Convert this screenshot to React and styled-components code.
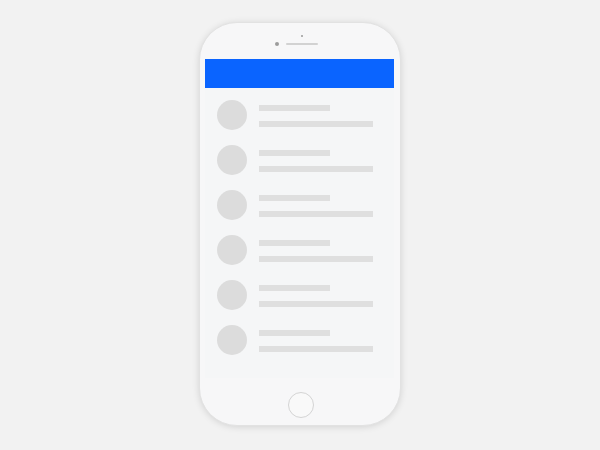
import React from 'react';
import styled, { createGlobalStyle } from 'styled-components';

const GlobalStyle = createGlobalStyle`
  html, body {
    margin: 0;
    padding: 0;
    background: #f2f2f2;
    font-family: "Liberation Sans", Arial, sans-serif;
  }
`;

const Page = styled.div`
  width: 600px;
  height: 450px;
  display: flex;
  align-items: center;
  justify-content: center;
`;

const Phone = styled.div`
  width: 202px;
  height: 404px;
  box-sizing: border-box;
  border-radius: 38px;
  background: #f7f7f8;
  border: 1px solid #e2e2e2;
  box-shadow: 0 1px 7px rgba(0, 0, 0, 0.13);
  display: flex;
  flex-direction: column;
  align-items: center;
  margin-top: -2px;
`;

const TopBar = styled.div`
  height: 36px;
  width: 100%;
  position: relative;
  flex-shrink: 0;
`;

const Sensor = styled.div`
  position: absolute;
  left: 101px;
  top: 12px;
  width: 2px;
  height: 2px;
  border-radius: 50%;
  background: #9a9a9a;
`;

const Camera = styled.div`
  position: absolute;
  left: 75px;
  top: 19px;
  width: 4px;
  height: 4px;
  border-radius: 50%;
  background: #9c9c9c;
`;

const Speaker = styled.div`
  position: absolute;
  left: 86px;
  top: 20px;
  width: 32px;
  height: 2px;
  border-radius: 1px;
  background: #d2d2d2;
`;

const Screen = styled.div`
  width: 189px;
  height: 319px;
  margin-left: 5px;
  align-self: flex-start;
  background: #f5f6f7;
  display: flex;
  flex-direction: column;
`;

const Header = styled.div`
  height: 29px;
  background: #0a64ff;
  flex-shrink: 0;
`;

const List = styled.div`
  display: flex;
  flex-direction: column;
  gap: 15px;
  padding: 12px 12px 0;
`;

const Row = styled.div`
  display: flex;
  align-items: flex-start;
  gap: 12px;
`;

const Avatar = styled.div`
  width: 30px;
  height: 30px;
  border-radius: 50%;
  background: #dcdcdc;
  flex-shrink: 0;
`;

const Lines = styled.div`
  display: flex;
  flex-direction: column;
  gap: 10px;
  padding-top: 5px;
`;

const Line = styled.div`
  width: ${(p) => p.w}px;
  height: 6px;
  background: #dfdfdf;
`;

const Bottom = styled.div`
  flex: 1;
  display: flex;
  align-items: flex-end;
  justify-content: center;
  padding-bottom: 7px;
`;

const HomeButton = styled.div`
  width: 24px;
  height: 24px;
  border-radius: 50%;
  border: 1.5px solid #d4d4d4;
  background: #f9f9f9;
  margin-left: 2px;
`;

const rows = [0, 1, 2, 3, 4, 5];

export default function App() {
  return (
    <>
      <GlobalStyle />
      <Page>
        <Phone>
          <TopBar>
            <Sensor />
            <Camera />
            <Speaker />
          </TopBar>
          <Screen>
            <Header />
            <List>
              {rows.map((r) => (
                <Row key={r}>
                  <Avatar />
                  <Lines>
                    <Line w={71} />
                    <Line w={114} />
                  </Lines>
                </Row>
              ))}
            </List>
          </Screen>
          <Bottom>
            <HomeButton />
          </Bottom>
        </Phone>
      </Page>
    </>
  );
}
